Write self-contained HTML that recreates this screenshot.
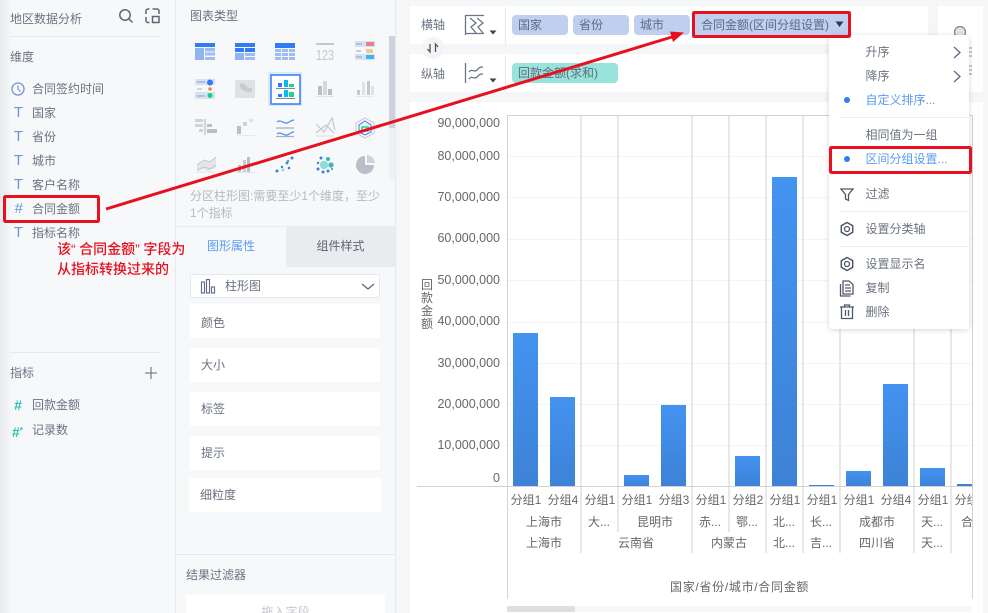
<!DOCTYPE html>
<html lang="zh-CN"><head><meta charset="utf-8"><title>地区数据分析</title>
<style>
html,body{margin:0;padding:0;width:988px;height:613px;overflow:hidden;background:#f5f6f8}
body{position:relative;font-family:"Liberation Sans","Noto Sans CJK SC",sans-serif;font-size:12px;color:#6b7281}
.a{position:absolute}
.t{position:absolute;white-space:nowrap;line-height:16px;height:16px}
.c{transform:translateX(-50%);color:#666}
.box{position:absolute;background:#fff}
.lb{position:absolute;left:201px;line-height:16px;white-space:nowrap;color:#6b7281}
.n{left:419px;width:81px;text-align:right;color:#666;font-size:12.5px}
.ic{left:12px;color:#6f93d8;font-size:15px;width:13px;text-align:center}
svg{position:absolute;left:0;top:0}
</style></head><body>
<div class="a" style="left:0;top:0;width:175px;height:613px;background:linear-gradient(90deg,#e9eaec 0,#f7f8fa 12px);border-right:1px solid #e6e8ec"></div>
<div class="a" style="left:176px;top:0;width:219px;height:613px;background:#f7f8fa;border-right:1px solid #e6e8ec"></div>
<div class="box" style="left:410px;top:6px;width:518px;height:38px"></div>
<div class="box" style="left:410px;top:54px;width:573px;height:38px"></div>
<div class="box" style="left:938px;top:6px;width:45px;height:86px"></div>
<div class="box" style="left:410px;top:102px;width:573px;height:511px"></div>

<div class="t" style="left:10px;top:11px">地区数据分析</div>
<div class="t" style="left:10px;top:49px">维度</div>
<div class="t" style="left:32px;top:81px">合同签约时间</div>
<div class="t" style="left:32px;top:105px">国家</div>
<div class="t" style="left:32px;top:129px">省份</div>
<div class="t" style="left:32px;top:153px">城市</div>
<div class="t" style="left:32px;top:177px">客户名称</div>
<div class="t" style="left:32px;top:201px">合同金额</div>
<div class="t" style="left:32px;top:225px">指标名称</div>
<div class="t ic" style="top:105px">T</div>
<div class="t ic" style="top:129px">T</div>
<div class="t ic" style="top:153px">T</div>
<div class="t ic" style="top:177px">T</div>
<div class="t ic" style="top:201px;font-style:italic">#</div>
<div class="t ic" style="top:225px">T</div>
<div class="t" style="left:10px;top:365px">指标</div>
<div class="t" style="left:32px;top:397px">回款金额</div>
<div class="t" style="left:32px;top:422px">记录数</div>
<div class="t" style="left:12px;top:397px;color:#2cc0b4;font-size:14px;width:12px;text-align:center;font-weight:bold">#</div>
<div class="t" style="left:12px;top:423px;color:#2cc0b4;font-size:14px;width:14px;font-weight:bold">#<span style="font-size:8px;vertical-align:4px">*</span></div>

<div class="t" style="left:190px;top:8px">图表类型</div>
<div class="t" style="left:190px;top:188px;color:#b5b9c2">分区柱形图:需要至少1个维度，至少</div>
<div class="t" style="left:190px;top:205px;color:#b5b9c2">1个指标</div>
<div class="a" style="left:176px;top:226px;width:110px;height:41px;background:#f7f8fa;border-top:1px solid #e9ebee;box-sizing:border-box;text-align:center;line-height:38px;color:#5b9bf0">图形属性</div>
<div class="a" style="left:286px;top:226px;width:109px;height:41px;background:#e9ebee;text-align:center;line-height:40px;color:#5f6572">组件样式</div>
<div class="box" style="left:190px;top:274px;width:188px;height:22px;border:1px solid #e6e8ec;border-radius:2px"></div>
<div class="t" style="left:225px;top:278px">柱形图</div>
<div class="box" style="left:190px;top:304px;width:190px;height:34px"></div><div class="lb" style="top:315px">颜色</div>
<div class="box" style="left:190px;top:348px;width:190px;height:34px"></div><div class="lb" style="top:357px">大小</div>
<div class="box" style="left:190px;top:392px;width:190px;height:34px"></div><div class="lb" style="top:401px">标签</div>
<div class="box" style="left:190px;top:436px;width:190px;height:34px"></div><div class="lb" style="top:445px">提示</div>
<div class="box" style="left:189px;top:478px;width:192px;height:34px"></div><div class="lb" style="left:200px;top:487px">细粒度</div>
<div class="a" style="left:176px;top:554px;width:219px;height:1px;background:#e6e8ec"></div>
<div class="t" style="left:186px;top:567px">结果过滤器</div>
<div class="box" style="left:186px;top:595px;width:199px;height:18px;overflow:hidden;text-align:center;color:#c4c7ce;line-height:16px;padding-top:9px;box-sizing:border-box">拖入字段</div>

<div class="t" style="left:421px;top:17px">横轴</div>
<div class="t" style="left:421px;top:66px">纵轴</div>
<div class="a" style="left:512px;top:15px;width:56px;height:20px;background:#bfcfef;border-radius:4px"></div>
<div class="a" style="left:573px;top:15px;width:56px;height:20px;background:#bfcfef;border-radius:4px"></div>
<div class="a" style="left:634px;top:15px;width:56px;height:20px;background:#bfcfef;border-radius:4px"></div>
<div class="a" style="left:692px;top:11px;width:159px;height:27px;background:#bfcfef"></div>
<div class="a" style="left:512px;top:63px;width:106px;height:20px;background:#98e3da;border-radius:4px"></div>
<div class="t" style="left:518px;top:17px;color:#5f6b80">国家</div>
<div class="t" style="left:579px;top:17px;color:#5f6b80">省份</div>
<div class="t" style="left:640px;top:17px;color:#5f6b80">城市</div>
<div class="t" style="left:701px;top:17px;color:#5f6b80">合同金额(区间分组设置)</div>
<div class="t" style="left:518px;top:65px;color:#5f6b80">回款金额(求和)</div>

<svg width="988" height="613" viewBox="0 0 988 613">
<g fill="none" stroke="#e6e8ec"><path d="M10 36.500H160M10 352.500H160"/></g>
<g fill="none" stroke="#5f6776" stroke-width="1.500"><circle cx="125" cy="15" r="5.200"/><path d="M129 19l3.500 3.500"/>
<path d="M146 14v-3a2 2 0 0 1 2-2h1.500M146 17v3.500a2 2 0 0 0 2 2h1.500M152.500 9h4.500a2 2 0 0 1 2 2v3M152.500 16.500h6.500v6h-6.500z"/></g>
<circle cx="18" cy="89" r="6" fill="none" stroke="#6f93d8" stroke-width="1.300"/><path d="M18 85.500V89l2.500 2.500" fill="none" stroke="#6f93d8" stroke-width="1.200"/>
<path d="M145 373h12M151 367v12" stroke="#7a8296" stroke-width="1.300"/>

<rect x="389" y="36" width="6" height="144" fill="#f0f1f4"/><rect x="389" y="36" width="6" height="92" fill="#cdd2dc"/>

<g fill="#9dbcf3">
<rect x="195" y="43" width="20" height="4" fill="#2f7cf6"/><rect x="195" y="48" width="9" height="12" fill="#8fb4f2"/><rect x="205" y="48" width="10" height="3.500"/><rect x="205" y="52.500" width="10" height="3"/><rect x="205" y="57" width="10" height="3"/>
<rect x="235" y="43" width="20" height="4" fill="#2f7cf6"/><rect x="235" y="48" width="9" height="4" fill="#2f7cf6"/><rect x="245" y="48" width="10" height="4" fill="#2f7cf6"/><rect x="235" y="53" width="9" height="7" fill="#8fb4f2"/><rect x="245" y="53" width="10" height="3"/><rect x="245" y="57" width="10" height="3"/>
<rect x="275" y="43" width="20" height="5" fill="#2f7cf6"/><rect x="275" y="49" width="6" height="3"/><rect x="282" y="49" width="6" height="3"/><rect x="289" y="49" width="6" height="3"/><rect x="275" y="53" width="6" height="3"/><rect x="282" y="53" width="6" height="3"/><rect x="289" y="53" width="6" height="3"/><rect x="275" y="57" width="6" height="3"/><rect x="282" y="57" width="6" height="3"/><rect x="289" y="57" width="6" height="3"/>
</g>
<rect x="316" y="43" width="18" height="2" fill="#c3c7cf"/><text x="325" y="60" text-anchor="middle" font-size="15" fill="#c3c7cf" font-family="Liberation Sans Narrow,Liberation Sans,sans-serif" textLength="18" lengthAdjust="spacingAndGlyphs">123</text>
<g><rect x="355" y="41" width="20" height="6" fill="#d5e1f7"/><rect x="355" y="48" width="20" height="5" fill="#f7f8fa"/><rect x="355" y="54" width="20" height="6" fill="#d5e1f7"/><rect x="356" y="43" width="6" height="2" fill="#b9c0cc"/><rect x="356" y="50" width="5" height="2" fill="#c9cdd5"/><rect x="356" y="56" width="6" height="2" fill="#b9c0cc"/><rect x="366" y="42" width="8" height="4" fill="#ec7f86"/><rect x="366" y="49" width="7" height="4" fill="#f3c88c"/><rect x="366" y="55" width="8" height="4" fill="#3cb7ee"/></g>
<rect x="195" y="79" width="20" height="6" fill="#d5e1f7"/><rect x="195" y="92" width="20" height="7" fill="#d5e1f7"/><rect x="197" y="81" width="8" height="2" fill="#b9c0cc"/><rect x="197" y="88" width="5" height="2" fill="#d0d3da"/><rect x="197" y="95" width="8" height="2" fill="#b9c0cc"/><circle cx="210" cy="82.500" r="3" fill="#2f7cf6"/><circle cx="210" cy="89" r="1.800" fill="#ef8a3c"/><circle cx="210" cy="95.500" r="2.500" fill="#15d27a"/>
<rect x="235" y="80" width="20" height="18" fill="#e0e1e5"/><path d="M240 84c4-3 6 3 10 4s2 6-3 4-9-5-7-8z" fill="#c9cbd1"/>
<rect x="268" y="72" width="34" height="34" fill="#dbe8fc"/><rect x="271" y="75" width="29" height="29" fill="#fff" stroke="#2f7cf6" stroke-width="1.500"/>
<rect x="278" y="83" width="4" height="4" fill="#2f7cf6"/><rect x="284" y="80" width="4" height="7" fill="#0db8ef"/><rect x="289" y="84" width="5" height="3" fill="#13dc85"/><rect x="276" y="88" width="19" height="1" fill="#7f8899"/>
<rect x="278" y="94" width="4" height="3" fill="#2f7cf6"/><rect x="284" y="90" width="4" height="7" fill="#0db8ef"/><rect x="289" y="92" width="5" height="5" fill="#13dc85"/><rect x="276" y="98" width="19" height="1" fill="#7f8899"/>
<rect x="318" y="86" width="4" height="9" fill="#b9bec9"/><rect x="323" y="81" width="4" height="14" fill="#d4d7dd"/><rect x="328" y="89" width="4" height="6" fill="#b9bec9"/><rect x="316" y="96" width="18" height="1" fill="#e0e2e6"/>
<rect x="357" y="90" width="3" height="5" fill="#c3c7cf"/><rect x="362" y="82" width="3" height="13" fill="#dfe1e5"/><rect x="367" y="81" width="3" height="14" fill="#c3c7cf"/><rect x="371" y="86" width="3" height="9" fill="#dfe1e5"/><rect x="356" y="96" width="18" height="1" fill="#e6e8ec"/>
<g fill="#d0d3da"><rect x="195" y="119" width="8" height="3"/><rect x="204" y="119" width="2" height="16"/><rect x="195" y="124" width="8" height="3"/><rect x="199" y="129" width="4" height="3"/></g><g fill="#b9bec9"><rect x="207" y="124" width="5" height="3"/><rect x="207" y="129" width="10" height="4"/></g>
<rect x="237" y="126" width="4" height="8" fill="#b9bec9"/><rect x="243" y="122" width="4" height="4" fill="#cfd2d9"/><rect x="249" y="119" width="4" height="3" fill="#e0e2e6"/><rect x="237" y="135" width="18" height="1" fill="#e6e8ec"/>
<g fill="none" stroke-width="1.200"><path d="M277 122c4-3 7 2 10 1s4-3 7-3" stroke="#4b8df0"/><path d="M276 128h18" stroke="#a3aec2"/><path d="M277 134c4-3 7 2 10 1s4-3 7-3" stroke="#4b8df0"/><path d="M276 136.500h18" stroke="#a3aec2"/>
<path d="M316 124l8 8 8-14 3 12M316 133l10-8 8 8" stroke="#c3c7cf"/><path d="M316 136h18" stroke="#e0e2e6"/></g>
<path d="M365 118l9 5v10l-9 5-9-5v-10z" fill="none" stroke="#c3c7cf"/><path d="M365 121l6 4v7l-6 3-6-3v-7z" fill="none" stroke="#2f7cf6"/><path d="M362 127h6v4h-6z" fill="none" stroke="#13dc85" stroke-width="1.500"/>
<path d="M197 165l7-5 6 2 6-5v11l-8 3-5-2-6 2z" fill="#e3e5e9"/><path d="M197 165l7-5 6 2 6-5M197 170l7-3 6 2 6-4" fill="none" stroke="#c3c7cf"/><path d="M196 172h19" stroke="#e0e2e6"/>
<rect x="238" y="165" width="3" height="7" fill="#b9bec9"/><rect x="243" y="160" width="3" height="12" fill="#c9ccd3"/><rect x="247" y="157" width="3" height="15" fill="#b9bec9"/><rect x="236" y="172" width="19" height="1" fill="#e0e2e6"/>
<g fill="#3d7fe0"><circle cx="277" cy="171" r="1.500"/><circle cx="282" cy="167" r="1.200"/><circle cx="287" cy="163" r="1.400"/><circle cx="289" cy="168" r="1.300"/><circle cx="292" cy="158" r="1.500"/></g><circle cx="283" cy="170" r="1.500" fill="#8fdcd2"/><circle cx="288" cy="161" r="1.300" fill="#3bb8ae"/>
<circle cx="324" cy="165" r="4.200" fill="#8fdcd2"/><circle cx="331" cy="165" r="2.600" fill="#3bb8ae"/><circle cx="328" cy="159" r="2" fill="#3bb8ae"/><g fill="#3d7fe0"><circle cx="321" cy="158" r="1.500"/><circle cx="318" cy="163" r="1.200"/><circle cx="318" cy="169" r="1.500"/><circle cx="323" cy="172" r="1.500"/><circle cx="328" cy="171" r="1.500"/><circle cx="332" cy="169" r="1"/></g>
<path d="M365 156v9h9a9 9 0 1 1-9-9z" fill="#b9bec9"/><path d="M367 155a9 9 0 0 1 8 8h-8z" fill="#cfd2d9"/>

<g fill="none" stroke="#5f6b80" stroke-width="1.100"><rect x="201.500" y="282" width="3" height="11"/><rect x="206.500" y="279.500" width="3" height="13.500"/><rect x="211.500" y="287" width="3" height="6"/></g>
<path d="M362 284l6 5 6-5" fill="none" stroke="#5f6b80" stroke-width="1.300"/>

<path d="M505.500 7v37M505.500 55v37" stroke="#e6e8ec"/>
<g fill="none" stroke="#6b7485" stroke-width="1.300"><path d="M465.500 15v20M465 15.500h19M465 33.500h19M470 18l6 5-5 4 5 6M477 18l6 5-5 4 5 6"/>
<path d="M465.500 63v20M469 72c3-4 5 1 8-2s3-3 6-3M469 79c3-4 5 1 8-2s3-3 6-3"/></g>
<path d="M489.500 30.500h7l-3.500 4zM489.500 78.500h7l-3.500 4z" fill="#444"/>
<circle cx="433" cy="48" r="11" fill="#f3f4f8"/><path d="M430 44v8l-2.500-3M435.500 52v-8l2.500 3" fill="none" stroke="#555" stroke-width="1.300"/>
<path d="M835.500 21.500h8l-4 5.500z" fill="#333c4d"/>

<g stroke="#f4f4f5"><path d="M507 156.500H972M507 197.500H972M507 239.500H972M507 280.500H972M507 322.500H972M507 363.500H972M507 404.500H972M507 445.500H972"/></g>
<defs><linearGradient id="g" x1="0" y1="0" x2="0" y2="1"><stop offset="0" stop-color="#4393f1"/><stop offset="1" stop-color="#3d82d6"/></linearGradient></defs>
<g fill="#e8e8e8"><rect x="580" y="116" width="2" height="437"/><rect x="617" y="116" width="2" height="416"/><rect x="691" y="116" width="2" height="437"/><rect x="728" y="116" width="2" height="416"/><rect x="765" y="116" width="2" height="437"/><rect x="802" y="116" width="2" height="437"/><rect x="839" y="116" width="2" height="437"/><rect x="913" y="116" width="2" height="437"/><rect x="950" y="116" width="2" height="437"/></g>
<g fill="url(#g)"><rect x="513" y="333" width="25" height="153"/><rect x="550" y="397" width="25" height="89"/><rect x="624" y="475" width="25" height="11"/><rect x="661" y="405" width="25" height="81"/><rect x="735" y="456" width="25" height="30"/><rect x="772" y="177" width="25" height="309"/><rect x="846" y="471" width="25" height="15"/><rect x="883" y="384" width="25" height="102"/><rect x="920" y="468" width="25" height="18"/></g>
<rect x="809" y="485" width="25" height="1" fill="#3d82d6"/><rect x="957" y="484" width="15" height="2" fill="#3d82d6"/>
<path d="M507 115.500H972.500M507.500 115V599M972.500 115V599M417 486.500H972" stroke="#d2d2d2" fill="none"/>
<rect x="507" y="606" width="465" height="6" rx="2" fill="#f7f7f7"/><rect x="507" y="606" width="68" height="6" rx="2" fill="#dedede"/>
</svg>

<div class="t n" style="top:115px">90,000,000</div>
<div class="t n" style="top:148px">80,000,000</div>
<div class="t n" style="top:189px">70,000,000</div>
<div class="t n" style="top:230px">60,000,000</div>
<div class="t n" style="top:272px">50,000,000</div>
<div class="t n" style="top:313px">40,000,000</div>
<div class="t n" style="top:355px">30,000,000</div>
<div class="t n" style="top:396px">20,000,000</div>
<div class="t n" style="top:437px">10,000,000</div>
<div class="t n" style="top:470px">0</div>
<div class="a" style="left:421px;top:279px;width:12px;line-height:13px;color:#666;text-align:center">回<br>款<br>金<br>额</div>

<div class="a" style="left:507px;top:488px;width:465px;height:70px;overflow:hidden">
<div class="t c" style="left:19px;top:4px">分组1</div><div class="t c" style="left:56px;top:4px">分组4</div><div class="t c" style="left:93px;top:4px">分组1</div><div class="t c" style="left:130px;top:4px">分组1</div><div class="t c" style="left:167px;top:4px">分组3</div><div class="t c" style="left:204px;top:4px">分组1</div><div class="t c" style="left:241px;top:4px">分组2</div><div class="t c" style="left:278px;top:4px">分组1</div><div class="t c" style="left:315px;top:4px">分组1</div><div class="t c" style="left:352px;top:4px">分组1</div><div class="t c" style="left:389px;top:4px">分组4</div><div class="t c" style="left:426px;top:4px">分组1</div><div class="t c" style="left:463px;top:4px">分组1</div>
<div class="t c" style="left:37px;top:26px">上海市</div><div class="t c" style="left:92px;top:26px">大...</div><div class="t c" style="left:148px;top:26px">昆明市</div><div class="t c" style="left:203px;top:26px">赤...</div><div class="t c" style="left:240px;top:26px">鄂...</div><div class="t c" style="left:277px;top:26px">北...</div><div class="t c" style="left:314px;top:26px">长...</div><div class="t c" style="left:370px;top:26px">成都市</div><div class="t c" style="left:425px;top:26px">天...</div><div class="t c" style="left:465px;top:26px">合...</div>
<div class="t c" style="left:37px;top:47px">上海市</div><div class="t c" style="left:129px;top:47px">云南省</div><div class="t c" style="left:222px;top:47px">内蒙古</div><div class="t c" style="left:277px;top:47px">北...</div><div class="t c" style="left:314px;top:47px">吉...</div><div class="t c" style="left:370px;top:47px">四川省</div><div class="t c" style="left:425px;top:47px">天...</div>
</div>
<div class="t" style="left:670px;top:579px;color:#666;letter-spacing:.7px">国家/省份/城市/合同金额</div>

<svg width="988" height="613" viewBox="0 0 988 613" style="pointer-events:none">
<circle cx="960" cy="32" r="5.500" fill="#dfe1e6" stroke="#7a8296" stroke-width="1.200"/>
<path d="M969 48h3M969 52h3M969 56h3M969 66h3M969 70h3M969 74h3" stroke="#8b92a3"/>
</svg>

<div class="a" style="left:829px;top:35px;width:140px;height:294px;background:#fff;border-radius:3px;box-shadow:0 1px 6px rgba(0,0,0,.16)"></div>
<div class="t" style="left:865.500px;top:44px">升序</div>
<div class="t" style="left:865.500px;top:68px">降序</div>
<div class="t" style="left:865.500px;top:92px;color:#5b9bf0">自定义排序...</div>
<div class="t" style="left:865.500px;top:127px">相同值为一组</div>
<div class="t" style="left:865.500px;top:151px;color:#5b9bf0">区间分组设置...</div>
<div class="t" style="left:865.500px;top:186px">过滤</div>
<div class="t" style="left:865.500px;top:221px">设置分类轴</div>
<div class="t" style="left:865.500px;top:256px">设置显示名</div>
<div class="t" style="left:865.500px;top:280px">复制</div>
<div class="t" style="left:865.500px;top:304px">删除</div>

<svg width="988" height="613" viewBox="0 0 988 613" style="pointer-events:none">
<path d="M839 117.500H969M839 211.500H969M839 246.500H969" stroke="#eceef1"/>
<path d="M954 47l6 5.500-6 5.500M954 71l6 5.500-6 5.500" fill="none" stroke="#5f6b80" stroke-width="1.300"/>
<circle cx="847" cy="100" r="3" fill="#2f7cf6"/><circle cx="847" cy="159" r="3" fill="#2f7cf6"/>
<g fill="none" stroke="#4f586b" stroke-width="1.300">
<path d="M841 189h12l-4.500 5.500v6l-3-1.500v-4.500z"/>
<circle cx="847" cy="229" r="2.500"/><path d="M847 222.500l5.700 3.200v6.600l-5.700 3.200-5.700-3.200v-6.600z" stroke-linejoin="round" stroke-width="1.500"/>
<circle cx="847" cy="264" r="2.500"/><path d="M847 257.500l5.700 3.200v6.600l-5.700 3.200-5.700-3.200v-6.600z" stroke-linejoin="round" stroke-width="1.500"/>
<path d="M843 281h6l4 3.500v9.500h-10zM840.500 284v12h10M845 285h5M845 288h6M845 291h6"/>
<path d="M840 307h14M844.500 307v-2h5v2M841.500 307.500v11h11v-11M845.500 310v6M848.500 310v6"/>
</g>
<g fill="none" stroke="#e8101f" stroke-width="3">
<rect x="4.500" y="196.500" width="94" height="25" rx="1"/>
<rect x="693.500" y="12.500" width="156" height="24" rx="1"/>
<rect x="830.500" y="147.500" width="140" height="25" rx="1"/>
</g>
<path d="M106 209L672 37" stroke="#e8101f" stroke-width="3"/>
<path d="M684 32.500L670 31.500L673 42z" fill="#e8101f"/>
</svg>
<div class="t" style="left:57px;top:241px;color:#e8101f;font-size:14px;font-weight:500">该<span style="letter-spacing:3.500px">“</span>合同金额<span style="letter-spacing:3.500px">”</span>字段为</div>
<div class="t" style="left:57px;top:261px;color:#e8101f;font-size:14px;font-weight:500">从指标转换过来的</div>
</body></html>
